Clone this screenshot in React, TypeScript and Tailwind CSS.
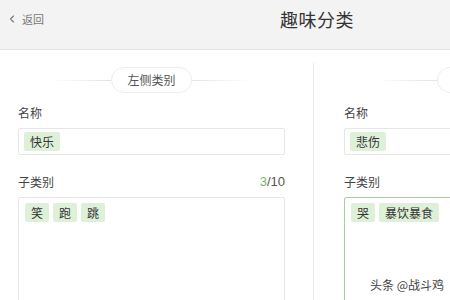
import { ChevronLeft } from 'lucide-react';

type Panel = {
  title: string;
  name: string[];
  subs: string[];
  count?: string;
  focused?: boolean;
};

const panels: Panel[] = [
  { title: '左侧类别', name: ['快乐'], subs: ['笑', '跑', '跳'], count: '3' },
  { title: '右侧类别', name: ['悲伤'], subs: ['哭', '暴饮暴食'], count: '2', focused: true },
];

function Tag({ text }: { text: string }) {
  return (
    <span className="h-[19px] px-[6px] flex items-center bg-[#dff0d8] text-[#333] text-[12px] leading-none rounded-[2px]">
      {text}
    </span>
  );
}

function CategoryPanel({ panel, first }: { panel: Panel; first?: boolean }) {
  return (
    <div
      className={`shrink-0 ${
        first ? 'w-[313px] pl-[18px] pr-[28px]' : 'w-[330px] pl-[30px] border-l border-[#ececec]'
      }`}
    >
      <div className="w-[267px]">
        {/* divider with pill */}
        <div className="flex items-center mt-[4px] h-[26px]">
          <div className="w-[32px]" />
          <div className="w-[61px] h-px bg-gradient-to-r from-transparent to-[#e3e3e3]" />
          <div className="w-[81px] h-[26px] rounded-full border border-[#ededed] flex items-center justify-center text-[12px] text-[#555] whitespace-nowrap">
            {panel.title}
          </div>
          <div className="w-[58px] h-px bg-gradient-to-l from-transparent to-[#e3e3e3]" />
        </div>

        <div className="mt-[11px] h-[18px] flex items-center text-[12px] text-[#444]">名称</div>
        <div className="mt-[6px] h-[27px] border border-[#e6e6e6] rounded-[2px] flex items-center gap-[4px] px-[5px]">
          {panel.name.map((t) => (
            <Tag key={t} text={t} />
          ))}
        </div>

        <div className="mt-[18px] h-[18px] flex items-center justify-between text-[12px] text-[#444]">
          <span>子类别</span>
          {first && (
            <span className="text-[13px] text-[#555] font-['Liberation_Sans',sans-serif]">
              <span className="text-[#7ab56f]">{panel.count}</span>/10
            </span>
          )}
        </div>
        <div
          className={`mt-[6px] h-[120px] border rounded-[2px] flex items-start gap-[4px] px-[6px] pt-[5px] ${
            panel.focused ? 'border-[#a9cfa1]' : 'border-[#e6e6e6]'
          }`}
        >
          {panel.subs.map((t) => (
            <Tag key={t} text={t} />
          ))}
        </div>
      </div>
    </div>
  );
}

export default function App() {
  return (
    <div className="relative w-[450px] h-[300px] overflow-hidden bg-white font-['Noto_Sans_CJK_SC','Noto_Sans',sans-serif]">
      {/* Header */}
      <div className="h-[50px] bg-[#f3f3f3] border-b border-[#e4e4e4] flex items-start">
        <div className="flex items-center pl-[6px] pt-[10px] h-[28px] text-[#777]">
          <ChevronLeft className="w-[12px] h-[12px]" strokeWidth={2.2} />
          <span className="ml-[4px] text-[11px]">返回</span>
        </div>
        <div className="ml-[236px] pt-[6px] text-[18px] text-[#333] tracking-[0.5px]">趣味分类</div>
      </div>

      {/* Panels */}
      <div className="flex pt-[13px]">
        {panels.map((p, i) => (
          <CategoryPanel key={p.title} panel={p} first={i === 0} />
        ))}
      </div>

      {/* watermark */}
      <div className="absolute left-[370px] top-[276px] whitespace-nowrap text-[12px] text-[#444] [text-shadow:0_0_2px_#fff,0_0_2px_#fff]">
        头条 @战斗鸡
      </div>
    </div>
  );
}
